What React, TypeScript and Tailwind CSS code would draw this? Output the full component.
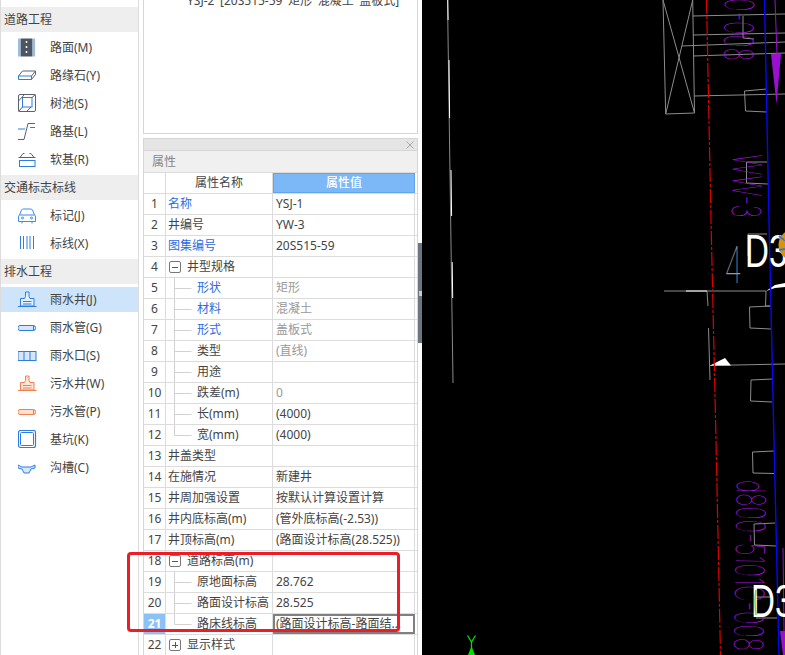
import React from "react";

const B = "#2f7de1";
const G = "#5a6270";
const O = "#ee8052";

const I = ({ children }: { children: React.ReactNode }) => (
  <svg width="20" height="20" viewBox="0 0 20 20" fill="none" strokeWidth="1" className="shrink-0">
    {children}
  </svg>
);

const icons: Record<string, React.ReactNode> = {
  road: (
    <I>
      <rect x="2.500" y="0.500" width="12" height="18" fill="#4c5563" />
      <path d="M1 0.500v18M16 0.500v18" stroke={B} />
      <path d="M8.500 3v2M8.500 8v2M8.500 13v2" stroke="#fff" strokeWidth="1.500" />
    </I>
  ),
  curb: (
    <I>
      <path d="M0.500 10h13v3.500h-13z" stroke={B} />
      <path d="M0.500 10l4-5h13l-4 5M17.500 5v3.500l-4 5" stroke={G} />
    </I>
  ),
  tree: (
    <I>
      <rect x="0.500" y="0.500" width="17" height="17" rx="1.500" stroke={G} />
      <rect x="4.500" y="3.500" width="9.500" height="9.500" stroke={B} />
      <path d="M0.500 7l6-6.500M13 13l-4.500 4.500M4.500 13l-4 4.500M14 3.500l3.500-3" stroke={G} />
    </I>
  ),
  base: (
    <I>
      <path d="M0 7h7M12 5.500h5" stroke={B} />
      <path d="M0 17.500h6l4-16h7" stroke={G} />
    </I>
  ),
  soft: (
    <I>
      <rect x="1.500" y="10.500" width="15.500" height="6" stroke={B} />
      <path d="M0.500 7.500h17M2 7.500l3-4M16 7.500l-3-4M5 3.500h1.500M11.500 3.500h1.500" stroke={G} />
    </I>
  ),
  car: (
    <I>
      <path d="M1.500 9l2-5q.5-1 2-1h7q1.500 0 2 1l2 5q1 .5 1 2v4.500h-17v-4.500q0-1.500 1-2zM1.500 9h15M4 15.500v2M14 15.500v2" stroke="#3b8cf0" />
      <circle cx="4.500" cy="12" r="1" stroke="#3b8cf0" />
      <circle cx="13.500" cy="12" r="1" stroke="#3b8cf0" />
    </I>
  ),
  lines: (
    <I>
      <path d="M2.500 2v13M5.500 2v13M9 2v13M12 2v13M15.500 2v13" stroke={B} />
    </I>
  ),
};

const well = (c: string, fill: string) => (
  <I>
    <path d="M-0.500 16.500h19" stroke={c} />
    <path d="M2.500 16v-7.500h4l1-2v-4.500h3.500v4.500l1 2h4v7.500z" stroke={c} fill={fill} />
    <path d="M5 11.500h8.500M5 14h8.500" stroke={c} />
  </I>
);
const pipe = (c: string, fill: string) => (
  <I>
    <rect x="0" y="7.500" width="17.500" height="5" rx="2" stroke={c} fill={fill} />
    <path d="M15.500 7.500v5" stroke={c} />
  </I>
);

const Row = ({ icon, label, active }: { icon: React.ReactNode; label: string; active?: boolean }) => (
  <div className={`h-[25px] flex items-center pl-[17px] ${active ? "bg-[#cde4fb]" : ""}`}>
    {icon}
    <span className="ml-[12px] text-[12px] text-[#444]">{label}</span>
  </div>
);

const Head = ({ label }: { label: string }) => (
  <div className="h-[25px] flex items-center pl-[3px] bg-[#eeeeee] text-[12px] text-[#444]">{label}</div>
);

type R = {
  name: string;
  value?: string;
  blue?: boolean;
  grey?: boolean;
  child?: "mid" | "last";
  exp?: "-" | "+";
};

const rows: R[] = [
  { name: "名称", value: "YSJ-1", blue: true },
  { name: "井编号", value: "YW-3" },
  { name: "图集编号", value: "20S515-59", blue: true },
  { name: "井型规格", exp: "-" },
  { name: "形状", value: "矩形", blue: true, grey: true, child: "mid" },
  { name: "材料", value: "混凝土", blue: true, grey: true, child: "mid" },
  { name: "形式", value: "盖板式", blue: true, grey: true, child: "mid" },
  { name: "类型", value: "(直线)", grey: true, child: "mid" },
  { name: "用途", child: "mid" },
  { name: "跌差(m)", value: "0", grey: true, child: "mid" },
  { name: "长(mm)", value: "(4000)", child: "mid" },
  { name: "宽(mm)", value: "(4000)", child: "last" },
  { name: "井盖类型" },
  { name: "在施情况", value: "新建井" },
  { name: "井周加强设置", value: "按默认计算设置计算" },
  { name: "井内底标高(m)", value: "(管外底标高(-2.53))" },
  { name: "井顶标高(m)", value: "(路面设计标高(28.525))" },
  { name: "道路标高(m)", exp: "-" },
  { name: "原地面标高", value: "28.762", child: "mid" },
  { name: "路面设计标高", value: "28.525", child: "mid" },
  { name: "路床线标高", value: "(路面设计标高-路面结构厚度)", child: "last" },
  { name: "显示样式", exp: "+" },
];

const Tree = ({ kind }: { kind: "mid" | "last" }) => (
  <svg width="29" height="21" viewBox="0 0 29 21" className="shrink-0">
    <path d={kind === "mid" ? "M6.500 0v21M6.500 10.500h17" : "M6.500 0v10.500h17"} stroke="#d2d2d2" fill="none" />
  </svg>
);

const Expander = ({ sign }: { sign: "-" | "+" }) => (
  <span className="w-[12px] h-[12px] ml-px mr-[6px] shrink-0 border border-[#777] rounded-[2px] flex items-center justify-center relative">
    <span className="w-[6px] h-px bg-[#555]" />
    {sign === "+" && <span className="absolute w-px h-[6px] bg-[#555]" />}
  </span>
);

const Table = () => (
  <div className="flex flex-col text-[12px] text-[#444]">
    <div className="h-[21px] flex border-b border-[#dcdcdc]">
      <div className="w-[22px] border-r border-[#dcdcdc] shrink-0" />
      <div className="w-[107px] border-r border-[#dcdcdc] flex items-center justify-center shrink-0">属性名称</div>
      <div className="w-[142px] bg-[#7cb8f8] border border-[#62a5ee] flex items-center justify-center text-white font-medium shrink-0">
        属性值
      </div>
    </div>
    {rows.map((r, i) => {
      const sel = i === 20;
      return (
        <div key={i} className="h-[21px] flex border-b border-[#dcdcdc]">
          <div
            className={`w-[22px] border-r border-[#dcdcdc] shrink-0 flex items-center justify-center ${
              sel ? "bg-[#8cc1f7] text-white font-bold" : ""
            }`}
          >
            {i + 1}
          </div>
          <div className="w-[107px] border-r border-[#dcdcdc] shrink-0 flex items-center pl-[2px] overflow-hidden whitespace-nowrap">
            {r.child && <Tree kind={r.child} />}
            {r.exp && <Expander sign={r.exp} />}
            <span className={r.blue ? "text-[#2c6be0]" : ""}>{r.name}</span>
          </div>
          {sel ? (
            <div className="w-[142px] shrink-0 flex items-center pl-px whitespace-nowrap overflow-hidden border-2 border-[#808080]">
              <span className="block w-[134px] truncate">{r.value}</span>
            </div>
          ) : (
            <div
              className={`w-[142px] shrink-0 flex items-center pl-[3px] whitespace-nowrap overflow-hidden border-r border-[#dcdcdc] ${
                r.grey ? "text-[#999]" : ""
              }`}
            >
              {r.value}
            </div>
          )}
        </div>
      );
    })}
  </div>
);

const Canvas = () => (
  <svg viewBox="422 0 363 655" width="363" height="655" className="block" fill="none">
    {/* left long line */}
    <path d="M447.500 0L453 383" stroke="#8a8a8a" />
    <path d="M447.800 0L448.100 20M449 60L449.600 118M451 170L451.600 216M452.200 262L452.700 298" stroke="#fff" />
    {/* axis */}
    <path d="M467.500 635.500L471.500 642L475.500 635.500M471.500 642V648" stroke="#00e000" strokeWidth="1.300" />
    <path d="M471.500 646L468 655H475z" fill="#00e000" />
    {/* grey structure */}
    <g stroke="#8c8c8c" strokeWidth="1">
      <path d="M663 0L665.700 114L694.500 113L692.700 0M663 0L694.500 113M692.700 0L665.700 114" />
      <path d="M692.700 16L785 14M693 35L785 33M682 46L785 42M693 56L785 53M694 96L785 94" />
      <path d="M767 89L744.500 91L745.500 111L767 112" />
      <path d="M743 16L743 38L754 39" />
      <path d="M767 162L746.500 162L746.500 183L768 184" />
      <path d="M664 291L766 291" />
      <path d="M707 291L708 306M766 291L765.500 306L770 306" />
      <path d="M771 306L749.500 307L750 328L771 329" />
      <path d="M708.500 328L710 380" />
      <path d="M710 365.500L785 364" />
      <path d="M773 379L751 380L750.500 401L772 402" />
      <path d="M774 451L752.500 452L753 473L774 473.500" />
      <path d="M775 523L754 524L754.500 545L776 546" />
      <path d="M756 597L770 597M756 618L777 618" />
      <path d="M748 234L767 234M748 256L748 234" />
    </g>
    <path d="M686 291H707" stroke="#fff" />
    <path d="M766 291L775 285L785 283V287L775 288z" fill="#fff" />
    <path d="M710 365.500L725 358L731 365.500z" fill="#fff" />
    {/* thin text */}
    <text
      x="724"
      y="283"
      fontFamily="Inter, 'Liberation Sans', sans-serif"
      fontWeight="100"
      fontSize="50"
      fill="#9a9a9a"
      transform="translate(724 283) scale(0.62 1) translate(-724 -283)"
    >
      4
    </text>
    {/* purple */}
    <path d="M775 0L777 55" stroke="#9b10d0" />
    <path d="M771 54H781L776.500 104z" fill="#9b10d0" />
    <path d="M783 548L784 631" stroke="#9b10d0" />
    <path d="M780 631H785V655H783z" fill="#9b10d0" />
    <text
      fontFamily="Inter, 'Liberation Sans', sans-serif"
      fontWeight="100"
      fontSize="40"
      fill="#a516dc"
      transform="translate(725 -2) rotate(91) scale(0.56 1)"
    >
      0-008
    </text>
    <text
      fontFamily="Inter, 'Liberation Sans', sans-serif"
      fontWeight="100"
      fontSize="40"
      fill="#a516dc"
      transform="translate(733 154) rotate(91) scale(0.56 1)"
    >
      WW-3
    </text>
    <text
      fontFamily="Inter, 'Liberation Sans', sans-serif"
      fontWeight="100"
      fontSize="40"
      fill="#a516dc"
      transform="translate(737 480) rotate(91) scale(0.56 1)"
    >
      d800-5101C-008
    </text>
    {/* center line + blue */}
    <path d="M706.500 0L711 220L716 440L720.500 655" stroke="#e00000" strokeWidth="1.200" strokeDasharray="14 2 3 2" />
    <path d="M764.500 0L769 220L774 440L779 655" stroke="#0808f0" strokeWidth="1.400" />
    {/* D3 */}
    <text
      fontFamily="'Liberation Sans', sans-serif"
      fontSize="46"
      fill="#fff"
      transform="translate(745 267) scale(0.72 1)"
    >
      D3
    </text>
    <circle cx="794" cy="245" r="15.500" fill="#d8950c" />
    <path d="M779 236Q785 241 785 240M779 250L785 249" stroke="#3b78d8" strokeWidth="2" />
    <text
      fontFamily="'Liberation Sans', sans-serif"
      fontSize="46"
      fill="#fff"
      transform="translate(751 617) scale(0.72 1)"
    >
      D3
    </text>
    <path d="M756 590Q754 600 756 615" stroke="#5fe05f" strokeWidth="1.500" />
  </svg>
);

export default function App() {
  return (
    <div
      className="relative w-[785px] h-[655px] overflow-hidden bg-white flex"
      style={{ fontFamily: "'Noto Sans', 'Noto Sans CJK SC', sans-serif" }}
    >
      {/* left nav */}
      <div className="w-[139px] h-full shrink-0 pt-[7px] border-l border-r border-[#dcdcdc] flex flex-col gap-[3px]">
        <Head label="道路工程" />
        <Row icon={icons.road} label="路面(M)" />
        <Row icon={icons.curb} label="路缘石(Y)" />
        <Row icon={icons.tree} label="树池(S)" />
        <Row icon={icons.base} label="路基(L)" />
        <Row icon={icons.soft} label="软基(R)" />
        <Head label="交通标志标线" />
        <Row icon={icons.car} label="标记(J)" />
        <Row icon={icons.lines} label="标线(X)" />
        <Head label="排水工程" />
        <Row icon={well(B, "#e3f0fd")} label="雨水井(J)" active />
        <Row icon={pipe(B, "#d6e7fb")} label="雨水管(G)" />
        <Row
          icon={
            <I>
              <rect x="0" y="5.500" width="18" height="9" stroke={B} fill="#d6e7fb" />
              <path d="M6 5.500v9M12 5.500v9" stroke={B} />
            </I>
          }
          label="雨水口(S)"
        />
        <Row icon={well(O, "#fde5d8")} label="污水井(W)" />
        <Row icon={pipe(O, "#fde0d2")} label="污水管(P)" />
        <Row
          icon={
            <I>
              <rect x="0.500" y="0.500" width="17" height="17" rx="2" stroke={B} strokeWidth="1.200" />
              <rect x="2.500" y="2.500" width="13" height="13" rx="1" stroke={B} />
            </I>
          }
          label="基坑(K)"
        />
        <Row
          icon={
            <I>
              <path d="M0 7l4 2h9l4-2v3l-4 1-2 4h-5l-2-4-4-1z" stroke={B} fill="#d6e7fb" />
            </I>
          }
          label="沟槽(C)"
        />
      </div>

      {/* middle column */}
      <div className="w-[275px] ml-[4px] shrink-0 flex flex-col">
        <div className="h-[134px] border border-t-0 border-[#d6d6d6] shrink-0 overflow-hidden">
          <div className="-mt-[7px] ml-[43px] text-[12px] leading-[16px] text-[#444] whitespace-nowrap [word-spacing:2.5px]">
            YSJ-2 [20S515-59 矩形 混凝土 盖板式]
          </div>
        </div>
        <div className="mt-[4px] flex-1 border border-b-0 border-[#d6d6d6] flex flex-col min-h-0">
          <div className="h-[12px] bg-[#e5e5e5] border-b border-[#d6d6d6] flex items-center justify-end pr-[3px] shrink-0">
            <svg width="8" height="8" viewBox="0 0 8 8" fill="none">
              <path d="M.5.500l7 7M7.500.500l-7 7" stroke="#aaa" />
            </svg>
          </div>
          <div className="h-[22px] bg-[#f0f0f0] border-b border-[#dcdcdc] flex items-center pl-[8px] text-[12px] text-[#888] shrink-0">
            属性
          </div>
          <Table />
        </div>
      </div>

      {/* splitter */}
      <div className="w-[4px] shrink-0 flex flex-col">
        <div className="mt-[243px] h-[100px] w-[4px] bg-[#6b7680] flex items-center justify-center">
          <span className="w-[3px] h-[5px] bg-[#c8ccd0]" />
        </div>
      </div>

      <div className="flex-1 bg-black overflow-hidden">
        <Canvas />
      </div>

      {/* red annotation */}
      <div className="absolute left-[127px] top-[552px] w-[273px] h-[80px] border-[3px] border-[#ee1c25] rounded-[4px]" />
    </div>
  );
}
